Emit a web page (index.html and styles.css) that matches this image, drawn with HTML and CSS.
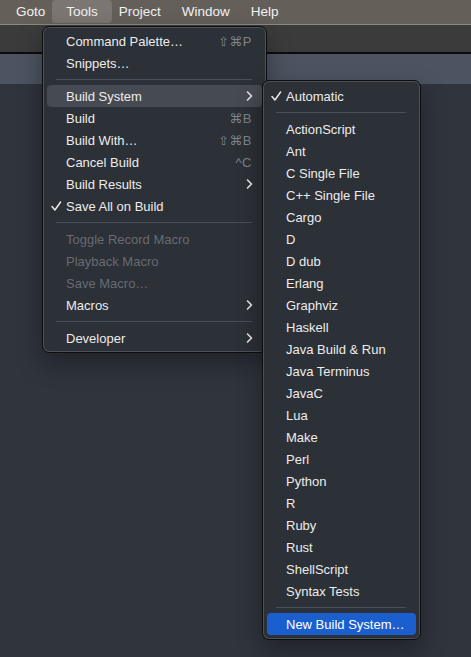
FILE: index.html
```html
<!DOCTYPE html>
<html>
<head>
<meta charset="utf-8">
<link rel="stylesheet" href="styles.css">
</head>
<body>
<div class="screen">
  <header class="menubar">
    <span class="mb-item">Goto</span>
    <span class="mb-item active">Tools</span>
    <span class="mb-item">Project</span>
    <span class="mb-item">Window</span>
    <span class="mb-item">Help</span>
  </header>
  <div class="toolbar"></div>
  <div class="tabbar"></div>
  <main class="editor"></main>

  <div class="menu main-menu">
    <div class="item"><span class="check"></span><span class="label">Command Palette…</span><span class="key">⇧⌘P</span></div>
    <div class="item"><span class="check"></span><span class="label">Snippets…</span></div>
    <div class="sep"></div>
    <div class="item hover"><span class="check"></span><span class="label">Build System</span><span class="chev"><svg width="7" height="10" viewBox="0 0 7 10"><path d="M1.5 1 L5.5 5 L1.5 9" fill="none" stroke="#e8e8e8" stroke-width="1.6" stroke-linecap="round" stroke-linejoin="round"/></svg></span></div>
    <div class="item"><span class="check"></span><span class="label">Build</span><span class="key">⌘B</span></div>
    <div class="item"><span class="check"></span><span class="label">Build With…</span><span class="key">⇧⌘B</span></div>
    <div class="item"><span class="check"></span><span class="label">Cancel Build</span><span class="key">^C</span></div>
    <div class="item"><span class="check"></span><span class="label">Build Results</span><span class="chev"><svg width="7" height="10" viewBox="0 0 7 10"><path d="M1.5 1 L5.5 5 L1.5 9" fill="none" stroke="#e8e8e8" stroke-width="1.6" stroke-linecap="round" stroke-linejoin="round"/></svg></span></div>
    <div class="item"><span class="check"><svg width="11" height="10" viewBox="0 0 11 10"><path d="M1 5.6 L3.9 9 L9.6 1" fill="none" stroke="#e8e8e8" stroke-width="1.5" stroke-linecap="round" stroke-linejoin="round"/></svg></span><span class="label">Save All on Build</span></div>
    <div class="sep"></div>
    <div class="item disabled"><span class="check"></span><span class="label">Toggle Record Macro</span></div>
    <div class="item disabled"><span class="check"></span><span class="label">Playback Macro</span></div>
    <div class="item disabled"><span class="check"></span><span class="label">Save Macro…</span></div>
    <div class="item"><span class="check"></span><span class="label">Macros</span><span class="chev"><svg width="7" height="10" viewBox="0 0 7 10"><path d="M1.5 1 L5.5 5 L1.5 9" fill="none" stroke="#e8e8e8" stroke-width="1.6" stroke-linecap="round" stroke-linejoin="round"/></svg></span></div>
    <div class="sep"></div>
    <div class="item"><span class="check"></span><span class="label">Developer</span><span class="chev"><svg width="7" height="10" viewBox="0 0 7 10"><path d="M1.5 1 L5.5 5 L1.5 9" fill="none" stroke="#e8e8e8" stroke-width="1.6" stroke-linecap="round" stroke-linejoin="round"/></svg></span></div>
  </div>

  <div class="menu sub-menu">
    <div class="item"><span class="check"><svg width="11" height="10" viewBox="0 0 11 10"><path d="M1 5.6 L3.9 9 L9.6 1" fill="none" stroke="#e8e8e8" stroke-width="1.5" stroke-linecap="round" stroke-linejoin="round"/></svg></span><span class="label">Automatic</span></div>
    <div class="sep"></div>
    <div class="item"><span class="check"></span><span class="label">ActionScript</span></div>
    <div class="item"><span class="check"></span><span class="label">Ant</span></div>
    <div class="item"><span class="check"></span><span class="label">C Single File</span></div>
    <div class="item"><span class="check"></span><span class="label">C++ Single File</span></div>
    <div class="item"><span class="check"></span><span class="label">Cargo</span></div>
    <div class="item"><span class="check"></span><span class="label">D</span></div>
    <div class="item"><span class="check"></span><span class="label">D dub</span></div>
    <div class="item"><span class="check"></span><span class="label">Erlang</span></div>
    <div class="item"><span class="check"></span><span class="label">Graphviz</span></div>
    <div class="item"><span class="check"></span><span class="label">Haskell</span></div>
    <div class="item"><span class="check"></span><span class="label">Java Build &amp; Run</span></div>
    <div class="item"><span class="check"></span><span class="label">Java Terminus</span></div>
    <div class="item"><span class="check"></span><span class="label">JavaC</span></div>
    <div class="item"><span class="check"></span><span class="label">Lua</span></div>
    <div class="item"><span class="check"></span><span class="label">Make</span></div>
    <div class="item"><span class="check"></span><span class="label">Perl</span></div>
    <div class="item"><span class="check"></span><span class="label">Python</span></div>
    <div class="item"><span class="check"></span><span class="label">R</span></div>
    <div class="item"><span class="check"></span><span class="label">Ruby</span></div>
    <div class="item"><span class="check"></span><span class="label">Rust</span></div>
    <div class="item"><span class="check"></span><span class="label">ShellScript</span></div>
    <div class="item"><span class="check"></span><span class="label">Syntax Tests</span></div>
    <div class="sep"></div>
    <div class="item selected"><span class="check"></span><span class="label">New Build System…</span></div>
  </div>
</div>
</body>
</html>
```
FILE: styles.css
```css
* { box-sizing: border-box; }
html, body { margin: 0; padding: 0; }
body {
  width: 471px;
  height: 657px;
  overflow: hidden;
  background: #2f343d;
  font-family: "Liberation Sans", Arial, "DejaVu Sans", sans-serif;
}
.screen {
  position: relative;
  width: 471px;
  height: 657px;
  display: flex;
  flex-direction: column;
}
.menubar {
  height: 25px;
  flex: none;
  background: #655f5a;
  border-bottom: 1px solid #8c8884;
  display: flex;
  align-items: center;
  gap: 21px;
  padding-left: 16px;
  font-size: 13.5px;
  color: #f2f2f2;
}
.mb-item {
  line-height: 22px;
  height: 23px;
  display: flex;
  align-items: center;
  border-radius: 4px;
}
.mb-item.active {
  background: #7b7672;
  padding: 0 14px;
  margin: 0 -14px;
  align-self: flex-start;
}
.toolbar {
  height: 29px;
  flex: none;
  background: #3b3b3b;
  border-bottom: 2px solid #0c0c0c;
}
.tabbar {
  height: 30px;
  flex: none;
  background: #4c5461;
}
.editor {
  flex: 1;
  background: #2f343d;
}
.menu {
  position: absolute;
  background: #2c3037;
  border: 1px solid #0d0e10;
  border-radius: 7px;
  box-shadow: inset 0 0 0 1px rgba(255,255,255,0.16), 0 10px 24px rgba(0,0,0,0.35);
  font-size: 13px;
  color: #ececec;
}
.main-menu {
  left: 42px;
  top: 26px;
  width: 225px;
  padding: 3px 0;
}
.sub-menu {
  left: 262px;
  top: 80px;
  width: 159px;
  padding: 4px 0;
}
.item {
  display: flex;
  align-items: center;
  height: 22px;
  margin: 0 4px;
  padding: 0 10px 0 4px;
  border-radius: 4px;
  white-space: nowrap;
}
.item.hover { background: #464a52; }
.item.selected { background: #1b5fcf; color: #ffffff; }
.item.disabled { color: #676b72; }
.check {
  width: 15px;
  flex: none;
  display: flex;
  align-items: center;
}
.label { flex: 1; }
.key {
  color: #7e8288;
  font-family: "Liberation Sans", "DejaVu Sans", sans-serif;
  letter-spacing: 0.5px;
}
.chev {
  display: flex;
  align-items: center;
  margin-right: -1px;
}
.sep {
  height: 1px;
  background: #4a4e55;
  margin: 5px 14px 5px 13px;
}
```
